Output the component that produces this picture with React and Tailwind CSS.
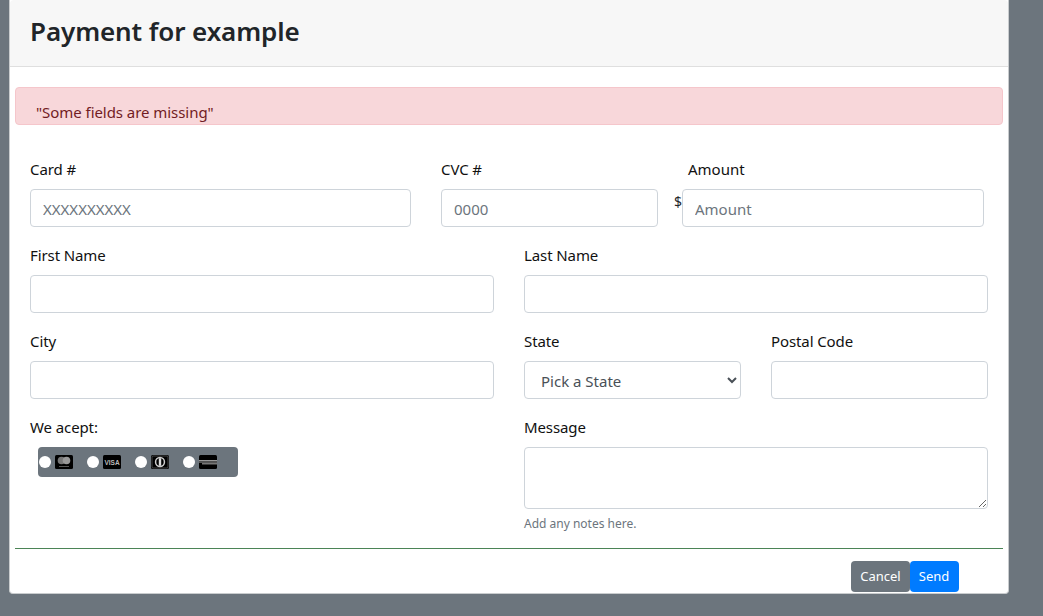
const inputClass =
  "block w-full h-[38px] px-3 pt-px text-[15px] text-[#495057] bg-white border border-[#ced4da] rounded placeholder:text-[#6c757d] outline-none"

function Field({ label, children, className = "" }) {
  return (
    <div className={`mb-4 ${className}`}>
      <label className="block h-6 leading-6 mb-2 text-[15px] tracking-[-0.1px] text-[#111]">{label}</label>
      {children}
    </div>
  )
}

function CardIcon({ children }) {
  return (
    <svg width="18" height="14" viewBox="0 0 18 14" className="ml-1">
      <rect width="18" height="14" rx="1.5" fill="#000" />
      {children}
    </svg>
  )
}

function CardOption({ name, children }) {
  return (
    <label className="flex items-center w-12">
      <input type="radio" name={name} className="appearance-none w-3 h-3 rounded-full bg-white" />
      {children}
    </label>
  )
}

export default function App() {
  return (
    <div className="min-h-[616px] bg-[#6c757d] pl-[9px] font-['Noto_Sans',sans-serif]">
      <div className="w-[1000px] h-[594px] bg-white border border-[#c9ccce] border-t-0 rounded-b">
        {/* Header */}
        <div className="h-[67px] bg-[#f7f7f7] border-b border-[#dfdfdf] pl-5 pb-[4px] rounded-t flex items-center">
          <h1 className="text-[26px] font-semibold tracking-[-0.1px] text-[#212529]">Payment for example</h1>
        </div>

        <div className="px-[5px] pt-5">
          <div className="h-[38px] bg-[#f8d7da] border border-[#f5c6cb] rounded pl-5 pt-3 text-[15px] tracking-[-0.05px] leading-6 text-[#721c24]">
            "Some fields are missing"
          </div>

          <form className="px-[15px] pt-8">
            {/* Card row */}
            <div className="flex">
              <Field label="Card #" className="w-[381px]">
                <input className={inputClass} placeholder="XXXXXXXXXX" />
              </Field>
              <Field label="CVC #" className="w-[217px] ml-[30px]">
                <input className={inputClass} placeholder="0000" />
              </Field>
              <div className="ml-4 mb-4">
                <label className="block h-6 leading-6 mb-2 pl-[14px] text-[15px] text-[#111]">Amount</label>
                <div className="flex">
                  <span className="w-2 pt-px text-[14px] leading-6 text-[#212529]">$</span>
                  <input className={`${inputClass} !w-[302px]`} placeholder="Amount" />
                </div>
              </div>
            </div>

            <div className="grid grid-cols-2 gap-x-[30px] w-[958px]">
              <Field label="First Name">
                <input className={inputClass} />
              </Field>
              <Field label="Last Name">
                <input className={inputClass} />
              </Field>
              <Field label="City">
                <input className={inputClass} />
              </Field>
              <div className="grid grid-cols-2 gap-x-[30px]">
                <Field label="State">
                  <select className={inputClass}>
                    <option>Pick a State</option>
                  </select>
                </Field>
                <Field label="Postal Code">
                  <input className={inputClass} />
                </Field>
              </div>
              <Field label="We acept:">
                <div className="ml-2 pl-px w-[200px] h-[30px] bg-[#6c757d] rounded flex items-center">
                  <CardOption name="card">
                    <CardIcon>
                      <circle cx="6.5" cy="5.5" r="3.8" fill="#777" />
                      <circle cx="11.5" cy="5.5" r="3.8" fill="#999" />
                      <rect x="4" y="11" width="10" height="1" fill="#555" />
                    </CardIcon>
                  </CardOption>
                  <CardOption name="card">
                    <CardIcon>
                      <text x="9" y="9.5" textAnchor="middle" fontSize="6.5" fontWeight="700" fill="#bbb" fontFamily="Liberation Sans">VISA</text>
                    </CardIcon>
                  </CardOption>
                  <CardOption name="card">
                    <CardIcon>
                      <rect x="1" y="1" width="16" height="12" rx="1" fill="#000" stroke="#888" strokeWidth="0.5" />
                      <circle cx="9" cy="7" r="5.2" fill="#ccc" />
                      <circle cx="9" cy="7" r="3.7" fill="#000" />
                      <rect x="7.8" y="3.2" width="2.4" height="7.6" fill="#ddd" />
                    </CardIcon>
                  </CardOption>
                  <CardOption name="card">
                    <CardIcon>
                      <rect x="0" y="5" width="18" height="1.5" fill="#999" />
                      <rect x="0" y="6.5" width="18" height="1.5" fill="#555" />
                      <rect x="3" y="8" width="15" height="1.5" fill="#777" />
                    </CardIcon>
                  </CardOption>
                </div>
              </Field>
              <div>
                <label className="block h-6 leading-6 mb-2 text-[15px] tracking-[-0.1px] text-[#111]">Message</label>
                <textarea className="block w-full h-[62px] px-3 py-1 text-[15px] bg-white border border-[#ced4da] rounded outline-none" />
                <small className="block mt-[5px] mb-[-1px] text-xs leading-[19.5px] text-[#6c757d]">Add any notes here.</small>
              </div>
            </div>
          </form>

          {/* Divider */}
          <div className="mt-4 -translate-y-px h-px bg-[#4b8456]" />

          {/* Footer buttons */}
          <div className="flex justify-end pr-11 pt-[11px]">
            <button className="w-[59px] h-[31px] pt-[2px] bg-[#6c757d] text-white text-[13px] rounded">Cancel</button>
            <button className="w-[49px] h-[31px] pt-[2px] pr-px bg-[#007bff] text-white text-[13px] rounded">Send</button>
          </div>
        </div>
      </div>
    </div>
  )
}
